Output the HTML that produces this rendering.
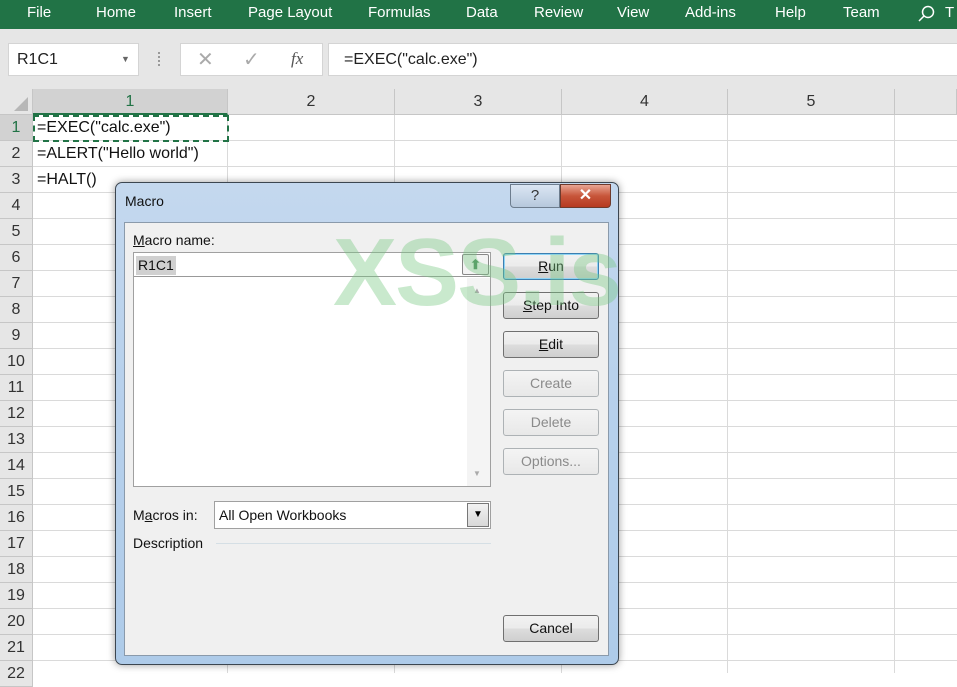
<!DOCTYPE html>
<html><head><style>
*{margin:0;padding:0;box-sizing:border-box}
body{width:957px;height:673px;overflow:hidden;position:relative;background:#fff;font-family:"Liberation Sans",sans-serif}
.a{position:absolute}
.rib{left:0;top:0;width:957px;height:29px;background:#217346;color:#fff;font-size:15px}
.rib span{position:absolute;top:4px}
.tb{left:0;top:29px;width:957px;height:60px;background:#e6e6e6}
.box{background:#fff;border:1px solid #d4d4d4}
.ch{top:89px;height:26px;background:#e6e6e6;border-right:1px solid #c6c6c6;border-bottom:1px solid #c6c6c6;text-align:center;font-size:16px;line-height:26px;color:#333}
.rh{left:0;width:33px;height:26px;background:#e6e6e6;border-right:1px solid #c6c6c6;border-bottom:1px solid #c6c6c6;text-align:center;font-size:16px;line-height:26px;color:#333}
.hl{left:33px;width:924px;height:1px;background:#dadada}
.vl{top:115px;width:1px;height:558px;background:#dadada}
.cell{left:37px;font-size:16px;color:#111}
.btn{left:503px;width:96px;height:27px;border:1px solid #707070;border-radius:3px;background:linear-gradient(#f2f2f2,#ebebeb 50%,#dddddd 51%,#cfcfcf);font-size:14px;text-align:center;line-height:25px;color:#111}
.dis{color:#8a8a8a;border-color:#adb2b5;background:linear-gradient(#f4f4f4,#e8e8e8)}
</style></head><body>
<div class="a rib">
<span style="left:27px">File</span><span style="left:96px">Home</span><span style="left:174px">Insert</span><span style="left:248px">Page Layout</span><span style="left:368px">Formulas</span><span style="left:466px">Data</span><span style="left:534px">Review</span><span style="left:617px">View</span><span style="left:685px">Add-ins</span><span style="left:775px">Help</span><span style="left:843px">Team</span>
<svg class="a" style="left:917px;top:5px" width="20" height="18"><circle cx="11" cy="7" r="5.5" fill="none" stroke="#fff" stroke-width="1.5"/><line x1="7" y1="11" x2="2" y2="16" stroke="#fff" stroke-width="1.5"/></svg>
<span style="left:945px">T</span>
</div>
<div class="a tb"></div>
<div class="a box" style="left:8px;top:43px;width:131px;height:33px;font-size:16px;line-height:31px;padding-left:8px;color:#222">R1C1<span class="a" style="left:112px;top:0;font-size:9px;color:#666">▼</span></div>
<div class="a" style="left:158px;top:52px;width:3px;height:14px;border-left:2px dotted #999"></div>
<div class="a box" style="left:180px;top:43px;width:143px;height:33px;color:#aaa;font-size:20px">
<span class="a" style="left:16px;top:3px">✕</span><span class="a" style="left:62px;top:3px">✓</span><span class="a" style="left:110px;top:5px;color:#555;font-family:'Liberation Serif',serif;font-style:italic;font-size:17px">fx</span></div>
<div class="a box" style="left:328px;top:43px;width:640px;height:33px;font-size:16px;line-height:31px;padding-left:15px;color:#222">=EXEC("calc.exe")</div>
<!-- headers -->
<div class="a" style="left:0;top:89px;width:33px;height:26px;background:#e6e6e6;border-right:1px solid #c6c6c6;border-bottom:1px solid #c6c6c6"><div class="a" style="left:14px;top:8px;width:0;height:0;border-left:14px solid transparent;border-bottom:14px solid #b7b7b7"></div></div>
<div class="a ch" style="left:33px;width:195px;background:#d2d2d2;color:#217346;border-bottom:2px solid #217346">1</div>
<div class="a ch" style="left:228px;width:167px">2</div>
<div class="a ch" style="left:395px;width:167px">3</div>
<div class="a ch" style="left:562px;width:166px">4</div>
<div class="a ch" style="left:728px;width:167px">5</div>
<div class="a ch" style="left:895px;width:62px"></div>
<div class="a vl" style="left:227px"></div><div class="a vl" style="left:394px"></div><div class="a vl" style="left:561px"></div><div class="a vl" style="left:727px"></div><div class="a vl" style="left:894px"></div>
<div class="a rh" style="top:115px;background:#d2d2d2;color:#217346">1</div><div class="a hl" style="top:140px"></div>
<div class="a rh" style="top:141px">2</div><div class="a hl" style="top:166px"></div>
<div class="a rh" style="top:167px">3</div><div class="a hl" style="top:192px"></div>
<div class="a rh" style="top:193px">4</div><div class="a hl" style="top:218px"></div>
<div class="a rh" style="top:219px">5</div><div class="a hl" style="top:244px"></div>
<div class="a rh" style="top:245px">6</div><div class="a hl" style="top:270px"></div>
<div class="a rh" style="top:271px">7</div><div class="a hl" style="top:296px"></div>
<div class="a rh" style="top:297px">8</div><div class="a hl" style="top:322px"></div>
<div class="a rh" style="top:323px">9</div><div class="a hl" style="top:348px"></div>
<div class="a rh" style="top:349px">10</div><div class="a hl" style="top:374px"></div>
<div class="a rh" style="top:375px">11</div><div class="a hl" style="top:400px"></div>
<div class="a rh" style="top:401px">12</div><div class="a hl" style="top:426px"></div>
<div class="a rh" style="top:427px">13</div><div class="a hl" style="top:452px"></div>
<div class="a rh" style="top:453px">14</div><div class="a hl" style="top:478px"></div>
<div class="a rh" style="top:479px">15</div><div class="a hl" style="top:504px"></div>
<div class="a rh" style="top:505px">16</div><div class="a hl" style="top:530px"></div>
<div class="a rh" style="top:531px">17</div><div class="a hl" style="top:556px"></div>
<div class="a rh" style="top:557px">18</div><div class="a hl" style="top:582px"></div>
<div class="a rh" style="top:583px">19</div><div class="a hl" style="top:608px"></div>
<div class="a rh" style="top:609px">20</div><div class="a hl" style="top:634px"></div>
<div class="a rh" style="top:635px">21</div><div class="a hl" style="top:660px"></div>
<div class="a rh" style="top:661px">22</div>
<div class="a" style="left:33px;top:115px;width:196px;height:27px;border:2px dashed #217346"></div>
<div class="a cell" style="top:119px">=EXEC("calc.exe")</div>
<div class="a cell" style="top:145px">=ALERT("Hello world")</div>
<div class="a cell" style="top:171px">=HALT()</div>
<!-- dialog -->
<div class="a" style="left:115px;top:182px;width:504px;height:483px;border:1px solid #3c4650;border-radius:7px;background:linear-gradient(#c4d8ee,#b8d1ec 40%,#aecbe9);box-shadow:0 0 8px rgba(0,0,0,.4)"></div>
<div class="a" style="left:125px;top:193px;font-size:14px;color:#111">Macro</div>
<div class="a" style="left:510px;top:184px;width:50px;height:24px;border:1px solid #6d7d8e;border-radius:0 0 0 4px;background:linear-gradient(#dbe6f3,#b6c8dc);text-align:center;font-size:15px;color:#333;line-height:22px">?</div>
<div class="a" style="left:560px;top:184px;width:51px;height:24px;border:1px solid #6e3a2c;border-radius:0 0 4px 0;background:linear-gradient(#e8a593,#c7553a 50%,#b63a20);text-align:center;font-size:16px;font-weight:bold;color:#fff;line-height:22px">✕</div>
<div class="a" style="left:124px;top:222px;width:485px;height:434px;background:#f0f0f0;border:1px solid #8a9aab"></div>
<div class="a" style="left:133px;top:232px;font-size:14px;color:#111"><u>M</u>acro name:</div>
<div class="a" style="left:133px;top:252px;width:358px;height:235px;background:#fff;border:1px solid #a0a0a0"></div>
<div class="a" style="left:134px;top:276px;width:356px;height:1px;background:#999"></div>
<div class="a" style="left:136px;top:256px;height:19px;background:#d0d0d0;font-size:14px;line-height:19px;padding:0 2px;color:#111">R1C1</div>
<div class="a" style="left:462px;top:254px;width:27px;height:21px;border:1px solid #888;border-radius:2px;background:#f3f3f3;color:#4a8a5a;font-size:13px;text-align:center;line-height:19px;font-weight:bold">⬆</div>
<div class="a" style="left:467px;top:278px;width:23px;height:208px;background:#f4f4f4"></div>
<div class="a" style="left:473px;top:286px;font-size:8px;color:#aaa">▲</div>
<div class="a" style="left:473px;top:469px;font-size:8px;color:#aaa">▼</div>
<div class="a" style="left:133px;top:507px;font-size:14px;color:#111">M<u>a</u>cros in:</div>
<div class="a" style="left:214px;top:501px;width:277px;height:28px;background:#fff;border:1px solid #a0a0a0;font-size:14px;line-height:26px;padding-left:4px;color:#111">All Open Workbooks</div>
<div class="a" style="left:467px;top:503px;width:22px;height:24px;border:1px solid #777;background:linear-gradient(#f2f2f2,#d8d8d8);font-size:10px;text-align:center;line-height:22px">▼</div>
<div class="a" style="left:133px;top:535px;font-size:14px;color:#111">Description</div>
<div class="a" style="left:216px;top:543px;width:275px;height:1px;background:#d5dfe5"></div>
<div class="a btn" style="top:253px;border-color:#3c7fb1;box-shadow:inset 0 0 0 1px #8fd4f6"><u>R</u>un</div>
<div class="a btn" style="top:292px"><u>S</u>tep Into</div>
<div class="a btn" style="top:331px"><u>E</u>dit</div>
<div class="a btn dis" style="top:370px">Create</div>
<div class="a btn dis" style="top:409px">Delete</div>
<div class="a btn dis" style="top:448px">Options...</div>
<div class="a btn" style="top:615px">Cancel</div>
<div class="a" style="left:333px;top:218px;font-size:96px;font-weight:bold;color:rgba(120,200,130,.4);letter-spacing:-2px">XSS.is</div>
</body></html>
